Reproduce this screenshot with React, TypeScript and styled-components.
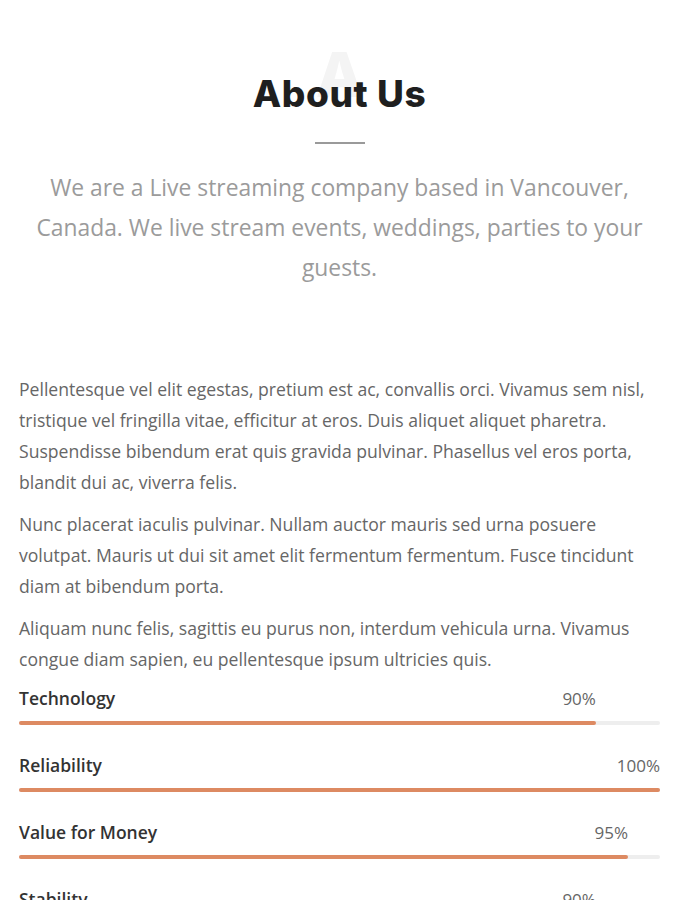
import styled, { createGlobalStyle } from "styled-components";

const GlobalStyle = createGlobalStyle`
  body {
    margin: 0;
    background: #ffffff;
    font-family: "Open Sans", "Liberation Sans", sans-serif;
  }
`;

const Section = styled.section`
  padding: 52px 15px 0 19px;
`;

const TitleBox = styled.div`
  position: relative;
  display: flex;
  justify-content: center;
  padding-top: 20px;
`;

const Watermark = styled.span`
  position: absolute;
  top: -8px;
  left: 50%;
  transform: translateX(-50%);
  font-family: "Inter", "DejaVu Sans", sans-serif;
  font-weight: 800;
  font-size: 62px;
  line-height: 1;
  color: #f4f4f4;
`;

const Title = styled.h2`
  position: relative;
  margin: 0;
  font-family: "Inter", "DejaVu Sans", sans-serif;
  font-weight: 800;
  font-size: 37px;
  line-height: 44px;
  color: #1f1f1f;
  letter-spacing: 0.6px;
`;

const Divider = styled.div`
  width: 50px;
  height: 2px;
  background: #9a9a9a;
  margin: 26px auto 24px;
`;

const Lead = styled.p`
  margin: 0 0 86px;
  text-align: center;
  font-size: 22.85px;
  line-height: 40px;
  color: #9b9b9b;
`;

const Body = styled.p`
  margin: 0 0 11px;
  font-size: 17.6px;
  line-height: 31px;
  color: #666666;
`;

const Skills = styled.div`
  display: flex;
  flex-direction: column;
  gap: 24px;
  margin-top: -4px;
`;

const Skill = styled.div`
  display: flex;
  flex-direction: column;
  gap: 7px;
`;

const SkillHead = styled.div`
  position: relative;
  height: 32px;
  display: flex;
  align-items: center;
`;

const SkillName = styled.span`
  font-size: 17.5px;
  font-weight: 600;
  color: #333333;
`;

const Percent = styled.span`
  position: absolute;
  top: 50%;
  transform: translate(-100%, -50%);
  font-size: 17px;
  color: #666666;
`;

const Track = styled.div`
  height: 4px;
  background: #eeeeee;
  border-radius: 2px;
`;

const Fill = styled.div`
  height: 100%;
  background: #dd8a62;
  border-radius: 2px;
`;

const skills = [
  { name: "Technology", value: 90 },
  { name: "Reliability", value: 100 },
  { name: "Value for Money", value: 95 },
  { name: "Stability", value: 90 },
];

const App = () => {
  return (
    <>
      <GlobalStyle />
      <Section>
        <TitleBox>
          <Watermark aria-hidden="true">A</Watermark>
          <Title>About Us</Title>
        </TitleBox>
        <Divider />
        <Lead>
          We are a Live streaming company based in Vancouver, Canada. We live
          stream events, weddings, parties to your guests.
        </Lead>
        <Body>
          Pellentesque vel elit egestas, pretium est ac, convallis orci. Vivamus
          sem nisl, tristique vel fringilla vitae, efficitur at eros. Duis
          aliquet aliquet pharetra. Suspendisse bibendum erat quis gravida
          pulvinar. Phasellus vel eros porta, blandit dui ac, viverra felis.
        </Body>
        <Body>
          Nunc placerat iaculis pulvinar. Nullam auctor mauris sed urna posuere
          volutpat. Mauris ut dui sit amet elit fermentum fermentum. Fusce
          tincidunt diam at bibendum porta.
        </Body>
        <Body>
          Aliquam nunc felis, sagittis eu purus non, interdum vehicula urna.
          Vivamus congue diam sapien, eu pellentesque ipsum ultricies quis.
        </Body>
        <Skills>
          {skills.map((s) => (
            <Skill key={s.name}>
              <SkillHead>
                <SkillName>{s.name}</SkillName>
                <Percent style={{ left: `${s.value}%` }}>{s.value}%</Percent>
              </SkillHead>
              <Track>
                <Fill style={{ width: `${s.value}%` }} />
              </Track>
            </Skill>
          ))}
        </Skills>
      </Section>
    </>
  );
};

export default App;
